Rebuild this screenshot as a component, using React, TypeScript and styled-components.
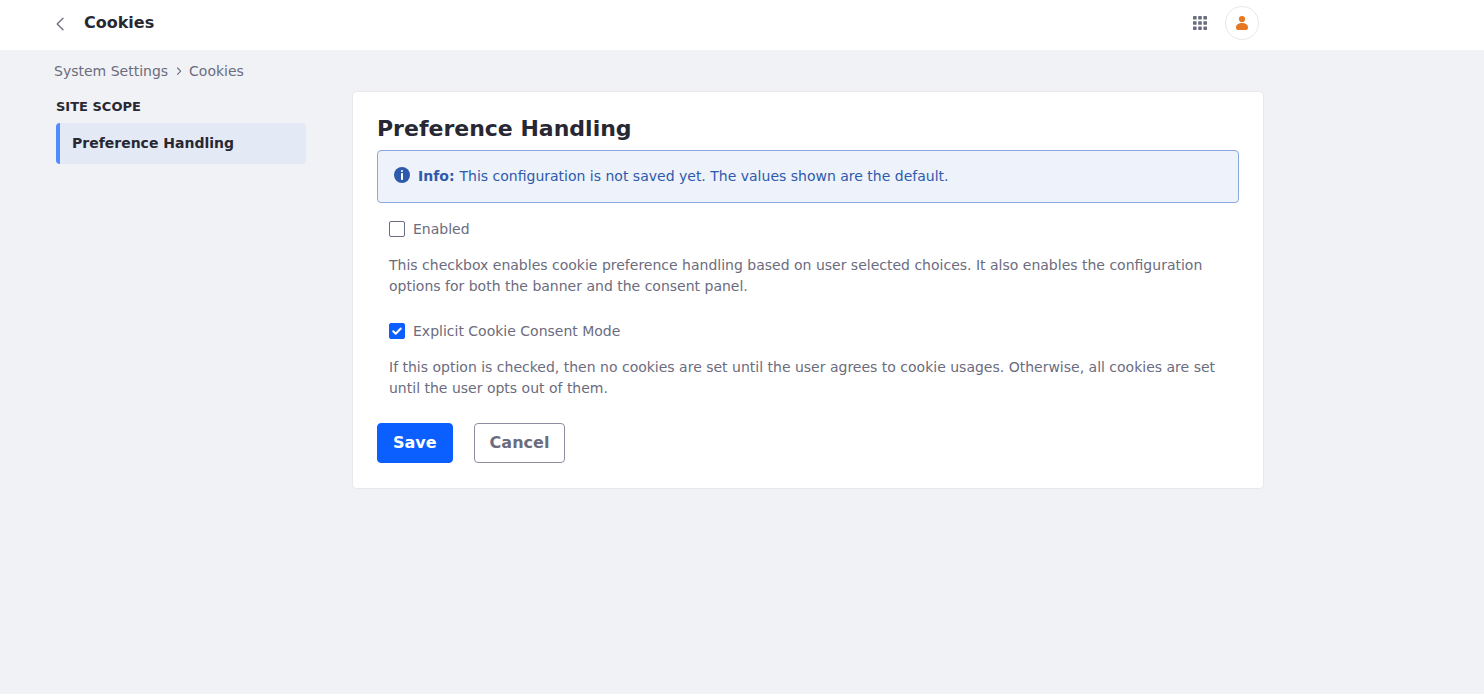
import React, { useState } from "react";
import styled, { createGlobalStyle } from "styled-components";

const GlobalStyle = createGlobalStyle`
  *, *::before, *::after { box-sizing: border-box; }
  body {
    margin: 0;
    background: #f1f2f5;
    color: #272833;
    font-family: "DejaVu Sans", sans-serif;
    font-size: 14px;
    line-height: 21px;
  }
`;

const Header = styled.header`
  display: flex;
  align-items: center;
  height: 50px;
  padding: 0 225px 4px 52px;
  background: #fff;
`;

const IconButton = styled.button`
  display: flex;
  align-items: center;
  justify-content: center;
  width: 16px;
  height: 16px;
  padding: 0;
  border: 0;
  background: none;
  color: #6b6c7e;
`;

const PageTitle = styled.h1`
  flex: 1;
  margin: 0 0 0 16px;
  font-size: 16px;
  line-height: 24px;
`;

const Avatar = styled.span`
  display: flex;
  align-items: center;
  justify-content: center;
  width: 34px;
  height: 34px;
  margin-left: 17px;
  border: 1px solid #e7e7ed;
  border-radius: 50%;
  background: #fff;
`;

const Breadcrumb = styled.nav`
  display: flex;
  align-items: center;
  height: 41px;
  padding: 1px 0 0 54px;
  color: #6b6c7e;

  svg { margin: 0 7px 1px; }
`;

const Content = styled.div`
  display: flex;
  align-items: flex-start;
  gap: 46px;
  padding-left: 56px;
`;

const Sidebar = styled.aside`
  width: 250px;
  padding-top: 6px;
`;

const ScopeLabel = styled.div`
  margin-bottom: 6px;
  font-size: 13px;
  font-weight: 700;
  line-height: 20px;
`;

const ScopeLink = styled.div`
  display: flex;
  align-items: center;
  height: 41px;
  padding: 0 12px;
  border-left: 4px solid #528bff;
  border-radius: 4px;
  background: #e4eaf5;
  font-weight: 700;
`;

const Sheet = styled.main`
  width: 912px;
  height: 398px;
  padding: 23px 24px 24px;
  border: 1px solid #e7e7ed;
  border-radius: 4px;
  background: #fff;
`;

const SheetTitle = styled.h2`
  margin: 0 0 8px;
  font-size: 22px;
  line-height: 27px;
`;

const Alert = styled.div`
  display: flex;
  align-items: center;
  height: 53px;
  padding: 0 16px;
  border: 1px solid #89a7e0;
  border-radius: 4px;
  background: #eef2fa;
  color: #2e5aac;

  svg { margin: 0 8px 3px 0; }
  strong { margin-right: 5px; }
`;

const Field = styled.div`
  height: 102px;
  padding: 0 12px;
  color: #6b6c7e;
`;

const Fields = styled.div`
  padding-top: 16px;
`;

const CheckLabel = styled.label`
  display: flex;
  align-items: center;
  gap: 8px;
  height: 21px;

  input {
    position: absolute;
    opacity: 0;
  }
`;

const CheckBox = styled.span<{ $checked: boolean }>`
  display: flex;
  align-items: center;
  justify-content: center;
  width: 16px;
  height: 16px;
  margin-bottom: 1px;
  border: 1px solid ${(p) => (p.$checked ? "#0b5fff" : "#6b6c7e")};
  border-radius: 2px;
  background: ${(p) => (p.$checked ? "#0b5fff" : "#fff")};
`;

const Help = styled.p`
  margin: 15px 0 0;
`;

const Actions = styled.div`
  display: flex;
  gap: 21px;
`;

const Button = styled.button<{ $primary?: boolean }>`
  height: 40px;
  padding: 0 15px 2px;
  border: 1px solid ${(p) => (p.$primary ? "#0b5fff" : "#8d8e9f")};
  border-radius: 4px;
  background: ${(p) => (p.$primary ? "#0b5fff" : "#fff")};
  color: ${(p) => (p.$primary ? "#fff" : "#6b6c7e")};
  font: 700 16px "DejaVu Sans", sans-serif;
`;

const BackIcon = () => (
  <svg width="16" height="16" viewBox="0 0 16 16" fill="none" stroke="currentColor" strokeWidth="1.3" strokeLinecap="round" strokeLinejoin="round">
    <path d="M11 3.300 5.200 9l5.800 5.700" />
  </svg>
);

const GridIcon = () => (
  <svg width="16" height="16" viewBox="0 0 16 16" fill="currentColor">
    {[1, 6.2, 11.4].map((y) =>
      [1, 6.2, 11.4].map((x) => <rect key={`${x}-${y}`} x={x} y={y} width="3.6" height="3.6" rx=".4" />)
    )}
  </svg>
);

const UserIcon = () => (
  <svg width="16" height="16" viewBox="0 0 16 16" fill="#e87722">
    <circle cx="8" cy="4" r="3.1" />
    <path d="M2 12.4C2 9.700 4.700 8 8 8s6 1.700 6 4.400c0 1.800-1.100 2.600-2.700 2.600H4.700C3.100 15 2 14.200 2 12.400Z" />
  </svg>
);

const SeparatorIcon = () => (
  <svg width="7" height="10" viewBox="0 0 7 10" fill="none" stroke="currentColor" strokeWidth="1.1" strokeLinecap="round" strokeLinejoin="round">
    <path d="M2.500 2 5.700 5.200 2.500 8.400" />
  </svg>
);

const InfoIcon = () => (
  <svg width="16" height="16" viewBox="0 0 16 16">
    <circle cx="8" cy="8" r="8" fill="currentColor" />
    <circle cx="8" cy="4" r="1.050" fill="#fff" />
    <rect x="7" y="6" width="2" height="7" rx=".7" fill="#fff" />
  </svg>
);

const CheckIcon = () => (
  <svg width="14" height="14" viewBox="0 0 14 14" fill="none" stroke="#fff" strokeWidth="2" strokeLinecap="round" strokeLinejoin="round">
    <path d="m3.200 7.300 2.500 2.500L10.800 4.500" />
  </svg>
);

type OptionProps = { label: string; help: string; initial: boolean };

const Option = ({ label, help, initial }: OptionProps) => {
  const [checked, setChecked] = useState(initial);
  return (
    <Field>
      <CheckLabel>
        <input type="checkbox" checked={checked} onChange={() => setChecked(!checked)} />
        <CheckBox $checked={checked}>{checked && <CheckIcon />}</CheckBox>
        {label}
      </CheckLabel>
      <Help>{help}</Help>
    </Field>
  );
};

export default function App() {
  return (
    <>
      <GlobalStyle />
      <Header>
        <IconButton aria-label="Back"><BackIcon /></IconButton>
        <PageTitle>Cookies</PageTitle>
        <IconButton aria-label="Applications"><GridIcon /></IconButton>
        <Avatar><UserIcon /></Avatar>
      </Header>
      <Breadcrumb>
        <span>System Settings</span>
        <SeparatorIcon />
        <span>Cookies</span>
      </Breadcrumb>
      <Content>
        <Sidebar>
          <ScopeLabel>SITE SCOPE</ScopeLabel>
          <ScopeLink>Preference Handling</ScopeLink>
        </Sidebar>
        <Sheet>
          <SheetTitle>Preference Handling</SheetTitle>
          <Alert>
            <InfoIcon />
            <strong>Info:</strong>
            <span>This configuration is not saved yet. The values shown are the default.</span>
          </Alert>
          <Fields>
            <Option
              label="Enabled"
              help="This checkbox enables cookie preference handling based on user selected choices. It also enables the configuration options for both the banner and the consent panel."
              initial={false}
            />
            <Option
              label="Explicit Cookie Consent Mode"
              help="If this option is checked, then no cookies are set until the user agrees to cookie usages. Otherwise, all cookies are set until the user opts out of them."
              initial
            />
          </Fields>
          <Actions>
            <Button $primary>Save</Button>
            <Button>Cancel</Button>
          </Actions>
        </Sheet>
      </Content>
    </>
  );
}
